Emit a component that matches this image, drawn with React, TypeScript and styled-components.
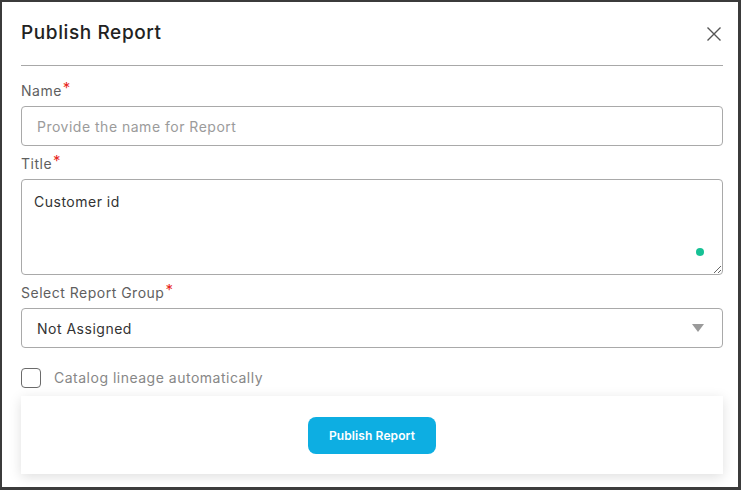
import React from "react";
import styled, { createGlobalStyle } from "styled-components";

const GlobalStyle = createGlobalStyle`
  html, body {
    margin: 0;
    padding: 0;
    background: #3b3b3b;
  }
  * {
    box-sizing: border-box;
  }
`;

const Backdrop = styled.div`
  width: 741px;
  height: 490px;
  padding: 2px 3px 3px 2px;
  background: #3b3b3b;
  font-family: Inter, "Noto Sans", sans-serif;
  letter-spacing: 0.5px;
`;

const Modal = styled.div`
  height: 100%;
  background: #ffffff;
  padding: 0 15px 0 19px;
  display: flex;
  flex-direction: column;
`;

const Header = styled.div`
  height: 64px;
  display: flex;
  align-items: center;
  justify-content: space-between;
  border-bottom: 1px solid #a8a8a8;
`;

const Title = styled.h1`
  margin: 0 0 2px;
  font-size: 19px;
  font-weight: 500;
  color: #222222;
  letter-spacing: 0.6px;
`;

const CloseButton = styled.button`
  border: none;
  background: none;
  padding: 0;
  margin-right: 1px;
  width: 16px;
  height: 16px;
  display: flex;
  cursor: pointer;
`;

const Form = styled.div`
  display: flex;
  flex-direction: column;
  padding-top: 15px;
`;

const Field = styled.div`
  display: flex;
  flex-direction: column;
  margin-bottom: 8px;
`;

const Label = styled.label`
  font-size: 14px;
  line-height: 20px;
  color: #5f5f5f;
  margin-bottom: 5px;
`;

const Required = styled.span`
  color: #e8281e;
  font-size: 15px;
  position: relative;
  top: -3px;
  margin-left: 1px;
`;

const TextInput = styled.input`
  height: 40px;
  border: 1px solid #a9a9a9;
  border-radius: 4px;
  padding: 0 15px;
  font-family: inherit;
  font-size: 14px;
  letter-spacing: 0.5px;
  color: #333333;
  outline: none;

  &::placeholder {
    color: #9b9b9b;
  }
`;

const TextAreaWrap = styled.div`
  position: relative;
  display: flex;
`;

const TextArea = styled.textarea`
  flex: 1;
  height: 96px;
  border: 1px solid #a9a9a9;
  border-radius: 4px;
  padding: 12px 12px;
  font-family: inherit;
  font-size: 14px;
  letter-spacing: 0.5px;
  line-height: 20px;
  color: #333333;
  outline: none;
`;

const StatusDot = styled.span`
  position: absolute;
  right: 19px;
  bottom: 19px;
  width: 8px;
  height: 8px;
  border-radius: 50%;
  background: #16c195;
`;

const SelectBox = styled.div`
  height: 40px;
  border: 1px solid #a9a9a9;
  border-radius: 4px;
  padding: 0 18px 0 15px;
  display: flex;
  align-items: center;
  justify-content: space-between;
  font-size: 14px;
  color: #333333;
`;

const CheckRow = styled.label`
  display: flex;
  align-items: center;
  gap: 13px;
  margin-top: 12px;
  font-size: 14px;
  line-height: 20px;
  color: #878787;
`;

const CheckBox = styled.span`
  width: 20px;
  height: 20px;
  border: 1.5px solid #6b6b6b;
  border-radius: 4px;
`;

const Footer = styled.div`
  margin-top: 8px;
  height: 78px;
  background: #ffffff;
  box-shadow: 0 3px 12px rgba(0, 0, 0, 0.13);
  display: flex;
  align-items: center;
  justify-content: center;
`;

const PrimaryButton = styled.button`
  width: 128px;
  height: 37px;
  border: none;
  border-radius: 8px;
  background: #0daee2;
  color: #ffffff;
  font-family: inherit;
  font-size: 12px;
  font-weight: 600;
  letter-spacing: 0.1px;
  cursor: pointer;
`;

const App: React.FC = () => {
  return (
    <Backdrop>
      <GlobalStyle />
      <Modal>
        <Header>
          <Title>Publish Report</Title>
          <CloseButton aria-label="Close">
            <svg width="16" height="16" viewBox="0 0 16 16">
              <path d="M1.5 1.5 L14.5 14.5 M14.5 1.5 L1.5 14.5" stroke="#555" strokeWidth="1.4" fill="none" />
            </svg>
          </CloseButton>
        </Header>
        <Form>
          <Field>
            <Label>
              Name<Required>*</Required>
            </Label>
            <TextInput placeholder="Provide the name for Report" />
          </Field>
          <Field>
            <Label>
              Title<Required>*</Required>
            </Label>
            <TextAreaWrap>
              <TextArea defaultValue="Customer id" />
              <StatusDot />
            </TextAreaWrap>
          </Field>
          <Field>
            <Label>
              Select Report Group<Required>*</Required>
            </Label>
            <SelectBox>
              <span>Not Assigned</span>
              <svg width="12" height="8" viewBox="0 0 12 8">
                <path d="M0 0 H12 L6 8 Z" fill="#9a9a9a" />
              </svg>
            </SelectBox>
          </Field>
          <CheckRow>
            <CheckBox />
            Catalog lineage automatically
          </CheckRow>
          <Footer>
            <PrimaryButton>Publish Report</PrimaryButton>
          </Footer>
        </Form>
      </Modal>
    </Backdrop>
  );
};

export default App;
